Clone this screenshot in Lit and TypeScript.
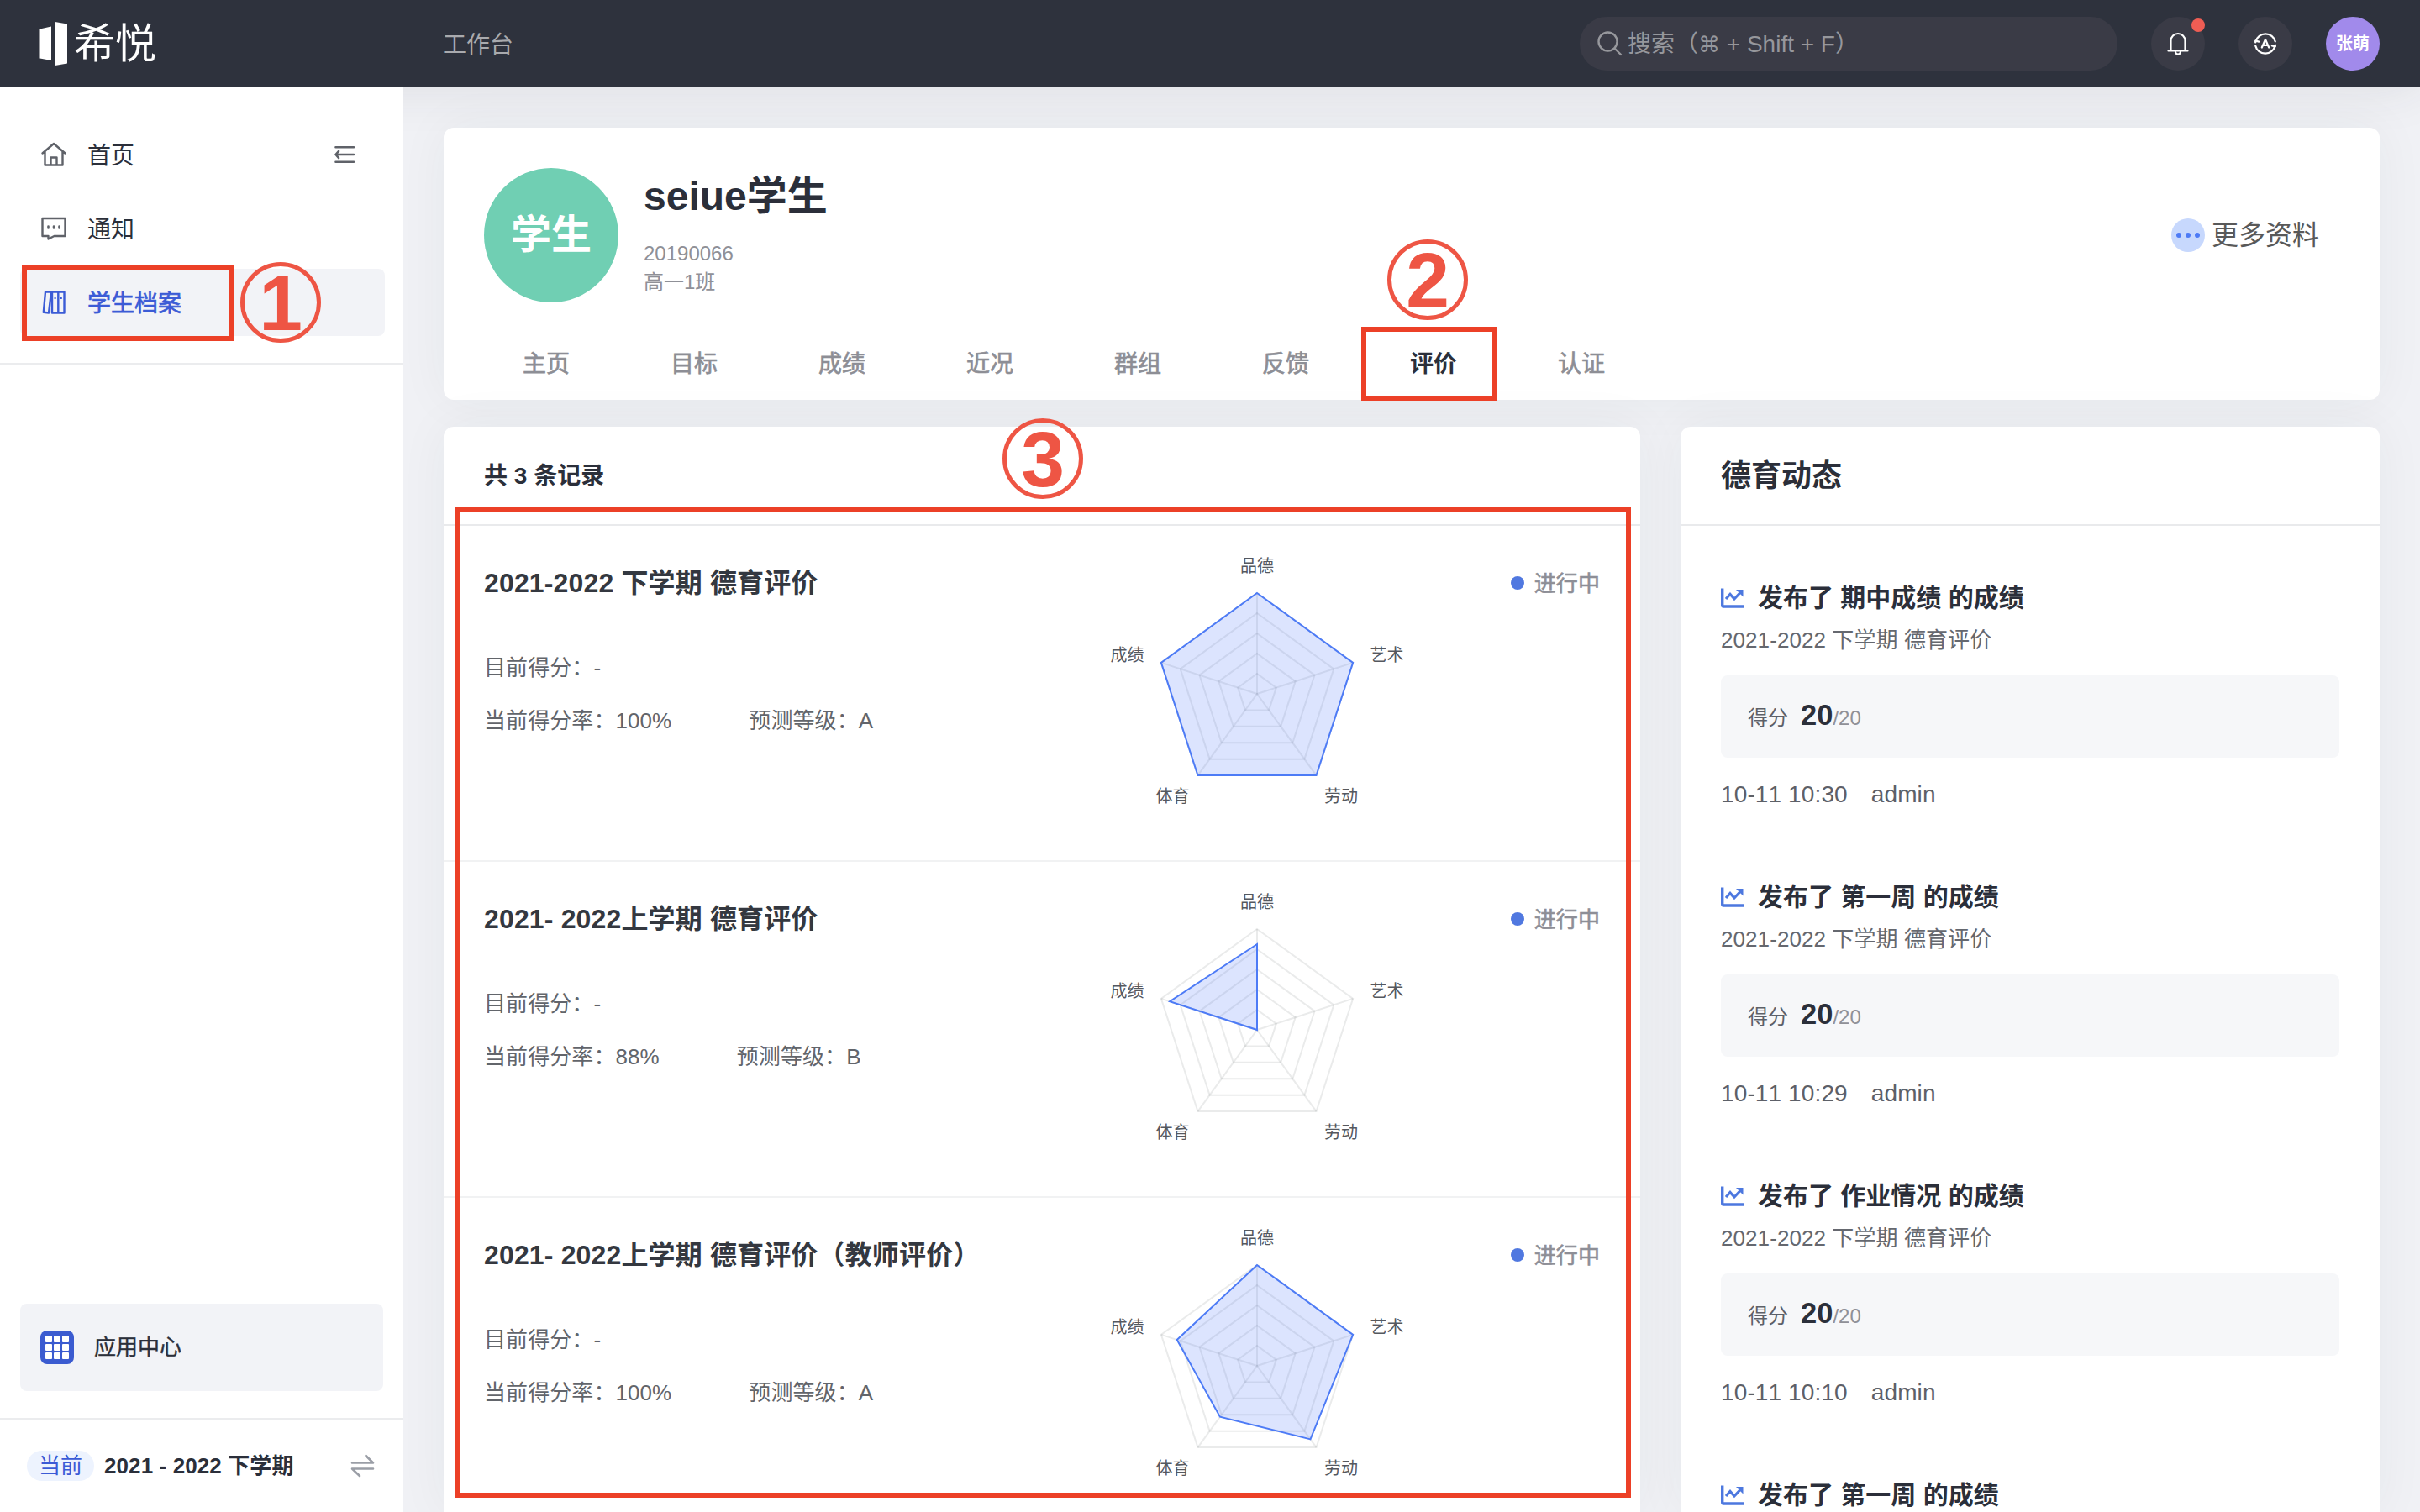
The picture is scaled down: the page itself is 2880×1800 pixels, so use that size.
import { css, html, LitElement, nothing, svg } from 'lit';
import { customElement, property } from 'lit/decorators.js';
import { classMap } from 'lit/directives/class-map.js';
import { styleMap } from 'lit/directives/style-map.js';

interface EvalRecord {
  title: string;
  rate: string;
  level: string;
  scores: number[];
}

interface FeedItem {
  name: string;
  time?: string;
}

const TABS = ['主页', '目标', '成绩', '近况', '群组', '反馈', '评价', '认证'];

// scores follow the axis order of the radar chart
const RECORDS: EvalRecord[] = [
  { title: '2021-2022 下学期 德育评价', rate: '100%', level: 'A', scores: [1, 1, 1, 1, 1] },
  { title: '2021- 2022上学期 德育评价', rate: '88%', level: 'B', scores: [0.85, 0, 0, 0, 0.91] },
  {
    title: '2021- 2022上学期 德育评价（教师评价）',
    rate: '100%',
    level: 'A',
    scores: [1, 1, 0.9, 0.625, 0.835],
  },
];

const FEED: FeedItem[] = [
  { name: '期中成绩', time: '10-11 10:30' },
  { name: '第一周', time: '10-11 10:29' },
  { name: '作业情况', time: '10-11 10:10' },
  { name: '第一周' },
];

const BOXES = [
  { x: 26, y: 315, w: 252, h: 91 },
  { x: 1620, y: 389, w: 162, h: 88 },
  { x: 542, y: 604, w: 1399, h: 1179 },
];

const STEPS = [
  { n: 1, x: 286, y: 312 },
  { n: 2, x: 1651, y: 285 },
  { n: 3, x: 1193, y: 498 },
];

const icons = {
  logo: html`<svg width="34" height="54" viewBox="0 0 34 54">
    <path d="M0.5 9.5 14 6.5V47L0.5 44.5Z M18.5 1 33 3.5V50.5L18.5 53Z" fill="#fff" />
  </svg>`,
  search: html`<svg width="30" height="30" viewBox="0 0 30 30" fill="none" stroke="currentColor" stroke-width="2.4" stroke-linecap="round">
    <circle cx="12.5" cy="12.5" r="11" />
    <path d="M20.5 20.5 28 28" />
  </svg>`,
  bell: html`<svg width="28" height="28" viewBox="0 0 28 28" fill="none" stroke="#fff" stroke-width="2.2" stroke-linecap="round">
    <path d="M2.5 22.5H25.5M5.5 22.5V10.500a8.500 8.500 0 0 1 17 0V22.5" />
    <path d="M11 23.500a3 3 0 0 0 6 0" />
  </svg>`,
  translate: html`<svg width="28" height="28" viewBox="0 0 28 28" fill="none" stroke="#fff" stroke-width="2.2" stroke-linecap="round" stroke-linejoin="round">
    <path d="M2.5 11.5A12 12 0 0 1 25.8 11.5M25.5 16.5A12 12 0 0 1 2.2 16.5" />
    <path d="M2.2 12.5V10.5L6.2 11.6M25.8 15.5V17.5L21.8 16.4" />
    <path d="M9.8 18.5 14 9 18.2 18.5M11.3 15.8H16.7" />
  </svg>`,
  home: html`<svg width="32" height="32" viewBox="0 0 32 32" fill="none" stroke="currentColor" stroke-width="2.4" stroke-linecap="round" stroke-linejoin="round">
    <path d="M2.5 14.5 16 3 29.5 14.5M5.5 12.5V28.5H26.5V12.5M12.5 28V19.5H19.5V28" />
  </svg>`,
  message: html`<svg width="32" height="32" viewBox="0 0 32 32" fill="none" stroke="currentColor" stroke-width="2.4" stroke-linejoin="round">
    <path d="M2.5 4H29.5V25H16.5L9.5 28.5V25H2.500Z" />
    <path d="M9.5 13.500V15.500M16 13.500V15.500M22.500 13.500V15.500" stroke-linecap="round" stroke-width="2.6" />
  </svg>`,
  archive: html`<svg width="32" height="32" viewBox="0 0 32 32" fill="none" stroke="currentColor" stroke-width="2.4" stroke-linejoin="round">
    <path d="M14 3.500H28.5V28.5H14ZM21.3 3.500V28.5" />
    <path d="M6 3.500H13L10 28.500 3.800 27.800Z" />
    <path d="M17.600 9V12M24.800 9V12" stroke-width="2" />
  </svg>`,
  collapse: html`<svg width="26" height="24" viewBox="0 0 26 24" fill="none" stroke="currentColor" stroke-width="2.6" stroke-linecap="round" stroke-linejoin="round">
    <path d="M1.5 3.3H23M1.5 12H23M1.5 20.7H23M5 8 1.5 12 5 16" />
  </svg>`,
  swap: html`<svg width="30" height="28" viewBox="0 0 30 28" fill="none" stroke="currentColor" stroke-width="2.6" stroke-linecap="round" stroke-linejoin="round">
    <path d="M2 10.5H27L18.500 2M27 17.500H2L11 26" />
  </svg>`,
  chart: html`<svg width="28" height="24" viewBox="0 0 28 24" fill="none" stroke="#4d78df">
    <path d="M1.7 0.500V20.500Q1.700 22 3.200 22H28" stroke-width="3.400" />
    <path d="M6 13 11 7.500 16 13 23.500 5" stroke-width="3.200" />
    <path d="M18 2H26.500V10.500Z" fill="#4d78df" stroke="none" />
  </svg>`,
};

@customElement('score-radar')
export class ScoreRadar extends LitElement {
  static override styles = css`
    :host {
      display: block;
      width: 400px;
      height: 320px;
    }
    svg {
      display: block;
      overflow: visible;
    }
    .grid {
      fill: none;
      stroke: rgba(20, 30, 35, 0.09);
      stroke-width: 2;
    }
    .area {
      fill: rgba(80, 120, 248, 0.2);
      stroke: #4d7bf6;
      stroke-width: 2;
    }
    text {
      font: 20px 'Liberation Sans', 'Noto Sans CJK SC', sans-serif;
      fill: #55585f;
      text-anchor: middle;
    }
  `;

  @property({ attribute: false }) scores: number[] = [];

  private static readonly labels = [
    { text: '品德', x: 200, y: 15 },
    { text: '艺术', x: 354.5, y: 121 },
    { text: '劳动', x: 300, y: 289 },
    { text: '体育', x: 99.5, y: 289 },
    { text: '成绩', x: 45.5, y: 121 },
  ];

  private point(axis: number, value: number) {
    const angle = (Math.PI * 2 * axis) / 5 - Math.PI / 2;
    const r = 120 * value;
    return `${(200 + r * Math.cos(angle)).toFixed(2)},${(160 + r * Math.sin(angle)).toFixed(2)}`;
  }

  private ring(values: number[]) {
    return values.map((v, i) => this.point(i, v)).join(' ');
  }

  override render() {
    return html`
      <svg width="400" height="320" viewBox="0 0 400 320">
        ${[0.2, 0.4, 0.6, 0.8, 1].map(
          (v) => svg`<polygon class="grid" points=${this.ring([v, v, v, v, v])} />`
        )}
        ${[0, 1, 2, 3, 4].map(
          (i) => svg`<polyline class="grid" points="200,160 ${this.point(i, 1)}" />`
        )}
        <polygon class="area" points=${this.ring(this.scores)} />
        ${ScoreRadar.labels.map((l) => svg`<text x=${l.x} y=${l.y}>${l.text}</text>`)}
      </svg>
    `;
  }
}

@customElement('app-root')
export class AppRoot extends LitElement {
  static override styles = css`
    :host {
      position: relative;
      display: flex;
      flex-direction: column;
      width: 2880px;
      height: 1800px;
      overflow: hidden;
      background: #f0f1f5;
      color: #2b2f3a;
      font-family: 'Liberation Sans', 'Noto Sans CJK SC', sans-serif;
      font-size: 28px;
      font-kerning: none;
      line-height: 40px;
      white-space: nowrap;
    }
    * {
      box-sizing: border-box;
    }
    svg {
      display: block;
      flex: none;
    }

    header {
      display: flex;
      align-items: center;
      flex: none;
      height: 104px;
      padding: 0 48px 0 47px;
      background: #2e323d;
      box-shadow: 0 0 60px rgba(46, 50, 61, 0.1);
    }
    .brand {
      display: flex;
      align-items: center;
      gap: 7px;
      width: 480px;
      color: #fff;
      font-size: 49px;
    }
    .brand span {
      height: 44px;
      line-height: 44px;
    }
    .workspace {
      flex: 1;
      padding-top: 3px;
      color: #a9aaae;
    }
    .search {
      display: flex;
      align-items: center;
      gap: 6px;
      width: 640px;
      height: 64px;
      margin-right: 40px;
      padding-left: 21px;
      border-radius: 32px;
      background: #3a3b46;
      color: #96979c;
    }
    .search span {
      padding-top: 2px;
    }
    .search kbd {
      font: 26px/1 'DejaVu Sans', sans-serif;
    }
    .round {
      position: relative;
      display: flex;
      align-items: center;
      justify-content: center;
      width: 64px;
      height: 64px;
      margin-right: 40px;
      border-radius: 50%;
      background: #3a3b46;
    }
    .round:last-child {
      margin-right: 0;
    }
    .round.me {
      background: #a18aeb;
      color: #fff;
      font-size: 20px;
      font-weight: 700;
    }
    .dot {
      position: absolute;
      top: 2px;
      right: 0;
      width: 16px;
      height: 16px;
      border-radius: 50%;
      background: #ee5d54;
    }

    .body {
      display: flex;
      flex: 1;
      min-height: 0;
    }
    aside {
      position: relative;
      display: flex;
      flex-direction: column;
      flex: none;
      width: 480px;
      background: #fff;
    }
    nav {
      display: flex;
      flex-direction: column;
      gap: 8px;
      padding: 40px 22px 32px 24px;
      border-bottom: 2px solid #ebecee;
    }
    .nav-item {
      display: flex;
      align-items: center;
      height: 80px;
      padding: 0 34px 0 24px;
      border-radius: 8px;
      color: #5f6269;
    }
    .nav-item span {
      flex: 1;
      margin-left: 24px;
      padding-top: 3px;
      color: #2b2f3a;
    }
    .nav-item.active {
      background: #f2f3f7;
      color: #3b5bd6;
    }
    .nav-item.active span {
      color: #3b5bd6;
      -webkit-text-stroke: 0.7px currentColor;
    }
    .apps {
      display: flex;
      align-items: center;
      gap: 24px;
      height: 104px;
      margin: auto 24px 32px;
      padding-left: 24px;
      border-radius: 8px;
      background: #f2f3f7;
      font-size: 26px;
      -webkit-text-stroke: 0.4px currentColor;
    }
    .apps-icon {
      display: grid;
      grid-template-columns: repeat(3, 8px);
      grid-auto-rows: 8px;
      place-content: center;
      gap: 2px;
      width: 40px;
      height: 40px;
      border-radius: 8px;
      background: #3b5bd0;
    }
    .apps-icon i {
      border-radius: 1px;
      background: #fff;
    }
    .term {
      display: flex;
      align-items: center;
      height: 112px;
      padding: 0 33px 0 32px;
      border-top: 2px solid #ebecee;
      font-size: 26px;
      font-weight: 600;
      letter-spacing: 0.1px;
    }
    .badge {
      width: 80px;
      height: 36px;
      margin-right: 12px;
      border-radius: 18px;
      background: #edf3fe;
      color: #3b5bd6;
      font-weight: 400;
      line-height: 37px;
      text-align: center;
    }
    .term svg {
      margin-left: auto;
      color: #9a9ea6;
    }

    main {
      flex: 1;
      display: grid;
      grid-template-columns: 1424px 832px;
      grid-template-rows: 324px 1fr;
      gap: 32px 48px;
      padding: 48px 48px 0;
      min-width: 0;
    }
    .card {
      border-radius: 12px 12px 0 0;
      background: #fff;
      box-shadow: 0 0 60px rgba(46, 50, 61, 0.05);
      overflow: hidden;
    }
    .profile {
      grid-column: 1 / 3;
      padding: 48px 72px 0 48px;
      border-radius: 12px;
    }
    .person {
      display: flex;
      height: 160px;
    }
    .avatar {
      width: 160px;
      height: 160px;
      margin-right: 30px;
      border-radius: 50%;
      background: #70cfb3;
      color: #fff;
      font-size: 48px;
      font-weight: 700;
      line-height: 159px;
      text-align: center;
    }
    .who {
      flex: 1;
      padding-top: 4px;
      color: #8f9097;
      font-size: 24px;
    }
    .who p {
      height: 34px;
      margin: 0;
      line-height: 34px;
    }
    h1 {
      height: 60px;
      margin: 0 0 21px;
      color: #2b2f3a;
      font-size: 48px;
      font-weight: 700;
      line-height: 60px;
    }
    .more {
      display: flex;
      align-items: center;
      align-self: center;
      gap: 8px;
      color: #595959;
      font-size: 32px;
    }
    .more-icon {
      display: flex;
      align-items: center;
      justify-content: center;
      gap: 5px;
      width: 40px;
      height: 40px;
      border-radius: 50%;
      background: #c7d8fd;
    }
    .more-icon i {
      width: 6px;
      height: 6px;
      border-radius: 50%;
      background: #4d7bf6;
    }
    .tabs {
      display: flex;
      margin: 28px 0 0 -14px;
    }
    .tab {
      width: 176px;
      height: 88px;
      color: #8d8e95;
      line-height: 91px;
      text-align: center;
      -webkit-text-stroke: 0.7px currentColor;
    }
    .tab.active {
      color: #2b2f3a;
      font-weight: 700;
      -webkit-text-stroke: 0;
    }

    .card-head {
      height: 118px;
      padding-left: 48px;
      border-bottom: 2px solid #e9eaec;
      font-weight: 700;
      line-height: 118px;
    }
    .card-head.large {
      font-size: 36px;
    }
    .record {
      display: grid;
      grid-template-columns: 720px 400px 1fr;
      height: 400px;
      padding: 40px 48px 0;
      border-bottom: 2px solid #f1f2f3;
      color: #62656b;
      font-size: 26px;
      letter-spacing: 0.08px;
    }
    .record h2 {
      height: 56px;
      margin: 0 0 46px;
      color: #343840;
      font-size: 32px;
      font-weight: 700;
      letter-spacing: 0.15px;
      line-height: 57px;
    }
    .record p {
      display: flex;
      gap: 92px;
      height: 63px;
      margin: 0;
      line-height: 54px;
    }
    .status {
      display: flex;
      align-items: center;
      justify-content: flex-end;
      gap: 12px;
      height: 56px;
      color: #8d8e96;
    }
    .status span {
      padding-top: 1px;
      -webkit-text-stroke: 0.6px currentColor;
    }
    .status i {
      width: 16px;
      height: 16px;
      border-radius: 50%;
      background: #5078e0;
    }

    .feed {
      padding: 61px 48px 0;
    }
    .feed-item {
      height: 356px;
      color: #5d6068;
    }
    .feed-item:last-child {
      height: auto;
    }
    .feed-title {
      display: flex;
      align-items: center;
      gap: 16px;
      height: 50px;
      color: #2b2f3a;
      font-size: 30px;
      font-weight: 700;
    }
    .feed-sub {
      height: 67px;
      color: #65686f;
      font-size: 26px;
      letter-spacing: 0.08px;
      line-height: 51px;
    }
    .score {
      display: flex;
      align-items: baseline;
      height: 98px;
      margin-bottom: 18px;
      padding-left: 32px;
      border-radius: 8px;
      background: #f6f7f9;
      font-size: 24px;
      line-height: 94px;
    }
    .score b {
      margin-left: 15px;
      color: #2b2f3a;
      font-size: 34.500px;
    }
    .score span {
      color: #8f9097;
    }
    .feed-meta {
      display: flex;
      gap: 28px;
      height: 52px;
      letter-spacing: 0.12px;
      line-height: 52px;
    }

    .box {
      position: absolute;
      border: 6px solid #ec4027;
    }
    .step {
      position: absolute;
      width: 96px;
      height: 96px;
      border: 5px solid #ee5544;
      border-radius: 50%;
      color: #ee5544;
      font-size: 93px;
      font-weight: 700;
      line-height: 88px;
      text-align: center;
    }
  `;

  private renderHeader() {
    return html`
      <header>
        <div class="brand">${icons.logo}<span>希悦</span></div>
        <div class="workspace">工作台</div>
        <div class="search">${icons.search}<span>搜索（<kbd>⌘</kbd> + Shift + F）</span></div>
        <div class="round">${icons.bell}<i class="dot"></i></div>
        <div class="round">${icons.translate}</div>
        <div class="round me">张萌</div>
      </header>
    `;
  }

  private renderNavItem(icon: unknown, label: string, active = false, extra: unknown = nothing) {
    return html`
      <div class=${classMap({ 'nav-item': true, active })}>${icon}<span>${label}</span>${extra}</div>
    `;
  }

  private renderSidebar() {
    return html`
      <aside>
        <nav>
          ${this.renderNavItem(icons.home, '首页', false, icons.collapse)}
          ${this.renderNavItem(icons.message, '通知')}
          ${this.renderNavItem(icons.archive, '学生档案', true)}
        </nav>
        <div class="apps">
          <div class="apps-icon">${Array.from({ length: 9 }, () => html`<i></i>`)}</div>
          应用中心
        </div>
        <div class="term"><span class="badge">当前</span>2021 - 2022 下学期${icons.swap}</div>
      </aside>
    `;
  }

  private renderProfile() {
    return html`
      <section class="card profile">
        <div class="person">
          <div class="avatar">学生</div>
          <div class="who">
            <h1>seiue学生</h1>
            <p>20190066</p>
            <p>高一1班</p>
          </div>
          <div class="more">
            <div class="more-icon"><i></i><i></i><i></i></div>
            更多资料
          </div>
        </div>
        <div class="tabs">
          ${TABS.map((t) => html`<div class=${classMap({ tab: true, active: t === '评价' })}>${t}</div>`)}
        </div>
      </section>
    `;
  }

  private renderRecord(r: EvalRecord) {
    return html`
      <div class="record">
        <div>
          <h2>${r.title}</h2>
          <p>目前得分：-</p>
          <p><span>当前得分率：${r.rate}</span><span>预测等级：${r.level}</span></p>
        </div>
        <score-radar .scores=${r.scores}></score-radar>
        <div class="status"><i></i><span>进行中</span></div>
      </div>
    `;
  }

  private renderFeedItem(f: FeedItem) {
    return html`
      <div class="feed-item">
        <div class="feed-title">${icons.chart}<span>发布了 ${f.name} 的成绩</span></div>
        ${
          f.time
            ? html`
                <div class="feed-sub">2021-2022 下学期 德育评价</div>
                <div class="score">得分<b>20</b><span>/20</span></div>
                <div class="feed-meta"><span>${f.time}</span><span>admin</span></div>
              `
            : nothing
        }
      </div>
    `;
  }

  override render() {
    return html`
      ${this.renderHeader()}
      <div class="body">
        ${this.renderSidebar()}
        <main>
          ${this.renderProfile()}
          <section class="card">
            <div class="card-head">共 3 条记录</div>
            ${RECORDS.map((r) => this.renderRecord(r))}
          </section>
          <section class="card">
            <div class="card-head large">德育动态</div>
            <div class="feed">${FEED.map((f) => this.renderFeedItem(f))}</div>
          </section>
        </main>
      </div>
      ${BOXES.map(
        (b) =>
          html`<div
            class="box"
            style=${styleMap({ left: `${b.x}px`, top: `${b.y}px`, width: `${b.w}px`, height: `${b.h}px` })}
          ></div>`
      )}
      ${STEPS.map(
        (s) => html`<div class="step" style=${styleMap({ left: `${s.x}px`, top: `${s.y}px` })}>${s.n}</div>`
      )}
    `;
  }
}

declare global {
  interface HTMLElementTagNameMap {
    'app-root': AppRoot;
    'score-radar': ScoreRadar;
  }
}
